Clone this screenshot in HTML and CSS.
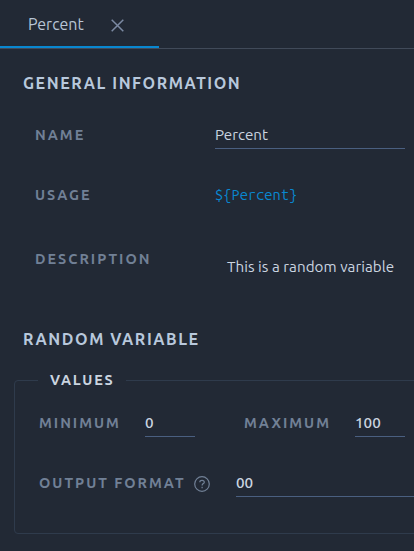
FILE: index.html
```html
<!DOCTYPE html>
<html lang="en">
<head>
    <meta charset="UTF-8">
    <meta name="viewport" content="width=device-width, initial-scale=1.0">
    <title>Percent</title>
    <link rel="stylesheet" href="styles.css">
</head>
<body>
    <div class="tabs">
        <div class="tab active">
            <span class="tab-title">Percent</span>
            <svg class="close" width="13" height="13" viewBox="0 0 13 13">
                <path d="M0.7 0.7L12.3 12.3M12.3 0.7L0.7 12.3"/>
            </svg>
        </div>
    </div>

    <div class="content">
        <h2 class="general-title">General information</h2>
        <div class="row">
            <label>Name</label>
            <div class="input">Percent</div>
        </div>
        <div class="row usage">
            <label>Usage</label>
            <code>${Percent}</code>
        </div>
        <div class="row description">
            <label>Description</label>
            <p>This is a random variable</p>
        </div>

        <h2 class="random-title">Random variable</h2>
        <fieldset>
            <legend>Values</legend>
            <div class="range">
                <label class="min-label">Minimum</label>
                <div class="input number">0</div>
                <label class="max-label">Maximum</label>
                <div class="input number">100</div>
            </div>
            <div class="format">
                <label class="format-label">Output format</label>
                <svg class="help" width="16" height="16" viewBox="0 0 16 16">
                    <circle cx="8" cy="8" r="7.3"/>
                    <path d="M5.8 6.3C5.8 5 6.7 4.3 8 4.3S10.3 5 10.3 6.2C10.3 7.6 8.1 7.6 8.1 9.4M8.1 10.8V12.2"/>
                </svg>
                <div class="input format-input">00</div>
            </div>
        </fieldset>
    </div>
</body>
</html>
```
FILE: styles.css
```css
* {
    box-sizing: border-box;
}

body {
    margin: 0;
    height: 551px;
    overflow: hidden;
    background-color: #222935;
    color: #cbd5e0;
    font-family: Ubuntu, 'Noto Sans', sans-serif;
    font-size: 15.2px;
}

.tabs {
    display: flex;
    height: 49px;
    border-bottom: 1px solid #414a59;
}

.tab {
    display: flex;
    align-items: center;
    width: 159px;
    padding-left: 28px;
    border-bottom: 2px solid #0987d0;
}

.tab-title {
    width: 83px;
    padding-top: 1px;
    font-size: 16px;
    color: #b8c5d6;
}

.close {
    margin-top: 5px;
    fill: none;
    stroke: #7c8aa3;
    stroke-width: 1.5;
}

.content {
    padding-left: 23px;
}

h2 {
    margin: 0;
    height: 24px;
    line-height: 24px;
    font-size: 16px;
    font-weight: 600;
    letter-spacing: 1.55px;
    text-transform: uppercase;
    white-space: nowrap;
    color: #b8c8dc;
}

.general-title {
    margin-top: 22px;
}

.random-title {
    margin-top: 53px;
}

.row {
    display: flex;
    height: 30px;
    margin-top: 24px;
    padding: 0 9px 0 12px;
    line-height: 24px;
}

.general-title + .row {
    margin-top: 25px;
}

label {
    flex: none;
    padding-top: 3px;
    font-size: 14.4px;
    font-weight: 600;
    line-height: 24px;
    letter-spacing: 2px;
    text-transform: uppercase;
    white-space: nowrap;
    color: #718096;
}

.row label {
    width: 180px;
}

.input {
    flex: 1;
    height: 29px;
    padding-top: 3px;
    line-height: 24px;
    border-bottom: 1px solid #4a5f80;
}

.usage {
    margin-top: 30px;
}

code {
    padding-top: 3px;
    font-family: 'Ubuntu Mono', 'DejaVu Sans Mono', monospace;
    font-size: 14.7px;
    color: #0987d0;
}

.description {
    margin-top: 34px;
}

.description p {
    margin: 0;
    padding: 11px 0 0 12px;
    white-space: nowrap;
    letter-spacing: 0.04px;
}

fieldset {
    width: 420px;
    height: 163px;
    margin: 20px 0 0 -9px;
    padding: 19px 0 0 24px;
    border: 1px solid #2f3b4c;
    border-radius: 4px;
}

legend {
    height: 18px;
    margin-left: -1px;
    padding: 0 12px;
    font-size: 14.4px;
    font-weight: 600;
    line-height: 18px;
    letter-spacing: 1.75px;
    text-transform: uppercase;
}

.range,
.format {
    display: flex;
}

.number,
.format-input {
    font-weight: 500;
}

.number {
    flex: none;
    width: 50px;
}

.min-label {
    width: 106px;
}

.max-label {
    width: 111px;
    margin-left: 49px;
}

.format {
    margin-top: 31px;
}

.format-label {
    width: 155px;
}

.help {
    margin: 8px 26px 0 0;
    fill: none;
    stroke: #718096;
    stroke-width: 1.2;
}
```
